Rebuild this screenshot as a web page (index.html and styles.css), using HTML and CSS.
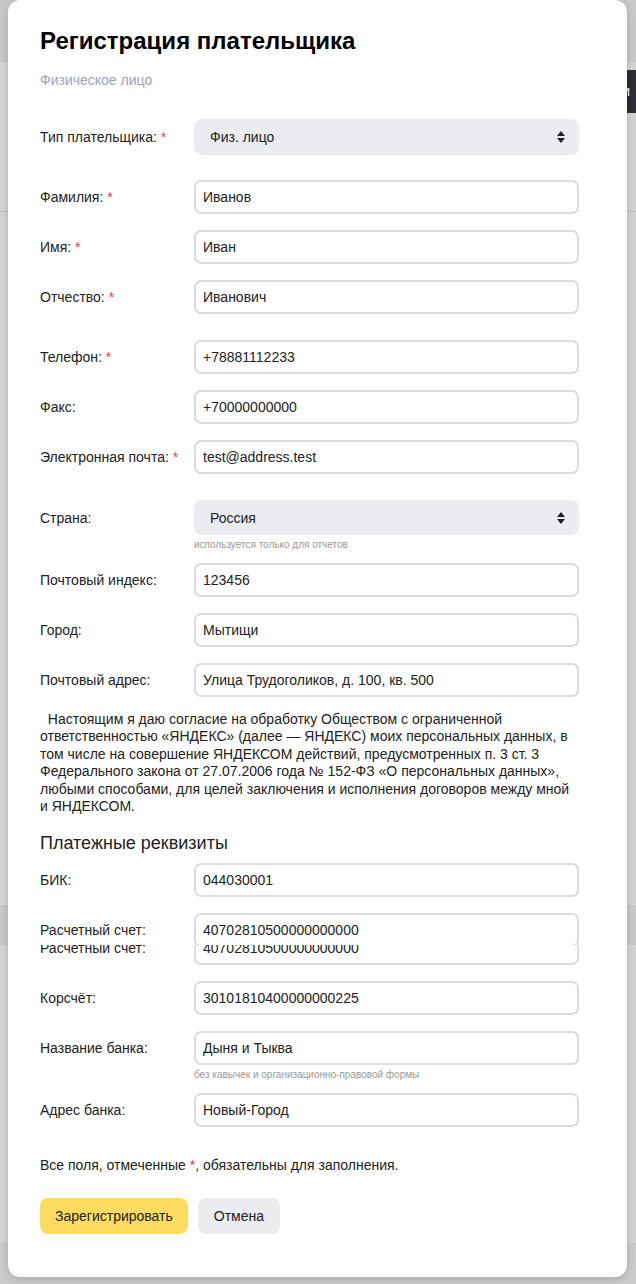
FILE: index.html
```html
<!DOCTYPE html>
<html lang="ru">
<head>
<meta charset="utf-8">
<title>Регистрация плательщика</title>
<link rel="stylesheet" href="styles.css">
</head>
<body>
<div class="backdrop">
  <div class="bg-top"></div>
  <div class="bg-btn">Ви</div>
  <div class="bg-line"></div>
  <div class="bg-band"></div>
  <div class="bg-bottom"></div>
</div>
<div class="modal">
  <h1 class="title">Регистрация плательщика</h1>
  <div class="subtitle">Физическое лицо</div>
  <form class="form">
    <div class="group">
      <div class="row">
        <label class="label">Тип плательщика: <span class="req">*</span></label>
        <div class="select"><span>Физ. лицо</span>
          <svg class="arrows" width="8" height="12" viewBox="0 0 8 12"><path d="M4 0L8 5H0Z M4 12L0 7H8Z" fill="#222"/></svg>
        </div>
      </div>
    </div>
    <div class="group">
      <div class="row"><label class="label">Фамилия: <span class="req">*</span></label><input class="input" value="Иванов"></div>
      <div class="row"><label class="label">Имя: <span class="req">*</span></label><input class="input" value="Иван"></div>
      <div class="row"><label class="label">Отчество: <span class="req">*</span></label><input class="input" value="Иванович"></div>
    </div>
    <div class="group">
      <div class="row"><label class="label">Телефон: <span class="req">*</span></label><input class="input" value="+78881112233"></div>
      <div class="row"><label class="label">Факс:</label><input class="input" value="+70000000000"></div>
      <div class="row"><label class="label">Электронная почта: <span class="req">*</span></label><input class="input" value="test@address.test"></div>
    </div>
    <div class="group group-last">
      <div class="field">
        <div class="row">
          <label class="label">Страна:</label>
          <div class="select select-country"><span>Россия</span>
            <svg class="arrows" width="8" height="12" viewBox="0 0 8 12"><path d="M4 0L8 5H0Z M4 12L0 7H8Z" fill="#222"/></svg>
          </div>
        </div>
        <div class="hint">используется только для отчетов</div>
      </div>
      <div class="row"><label class="label">Почтовый индекс:</label><input class="input" value="123456"></div>
      <div class="row"><label class="label">Город:</label><input class="input" value="Мытищи"></div>
      <div class="row"><label class="label">Почтовый адрес:</label><input class="input" value="Улица Трудоголиков, д. 100, кв. 500"></div>
    </div>
    <p class="consent">&nbsp;&nbsp;Настоящим я даю согласие на обработку Обществом с ограниченной<br>ответственностью «ЯНДЕКС» (далее — ЯНДЕКС) моих персональных данных, в<br>том числе на совершение ЯНДЕКСОМ действий, предусмотренных п. 3 ст. 3<br>Федерального закона от 27.07.2006 года № 152-ФЗ «О персональных данных»,<br>любыми способами, для целей заключения и исполнения договоров между мной<br>и ЯНДЕКСОМ.</p>
    <h2 class="section">Платежные реквизиты</h2>
    <div class="group">
      <div class="row"><label class="label">БИК:</label><input class="input" value="044030001"></div>
      <div class="clip clip-top">
        <div class="row"><label class="label">Расчетный счет:</label><input class="input" value="40702810500000000000"></div>
      </div>
      <div class="clip clip-bottom">
        <div class="row"><label class="label">Расчетный счет:</label><input class="input" value="40702810500000000000"></div>
      </div>
      <div class="row"><label class="label">Корсчёт:</label><input class="input" value="30101810400000000225"></div>
      <div class="field">
        <div class="row"><label class="label">Название банка:</label><input class="input" value="Дыня и Тыква"></div>
        <div class="hint">без кавычек и организационно-правовой формы</div>
      </div>
      <div class="row"><label class="label">Адрес банка:</label><input class="input" value="Новый-Город"></div>
    </div>
    <p class="note">Все поля, отмеченные <span class="req">*</span>, обязательны для заполнения.</p>
    <div class="actions">
      <button type="button" class="btn btn-primary">Зарегистрировать</button>
      <button type="button" class="btn btn-secondary">Отмена</button>
    </div>
  </form>
</div>
</body>
</html>
```
FILE: styles.css
```css
* { box-sizing: border-box; }
html, body { margin: 0; padding: 0; }
body {
  background: #d4d4d4;
  font-family: "Liberation Sans", Arial, sans-serif;
  font-size: 14px;
  color: #222;
  position: relative;
  min-height: 1284px;
  overflow: hidden;
}
.backdrop { position: absolute; inset: 0; }
.bg-top { position: absolute; left: 0; right: 0; top: 0; height: 62px; background: #c9c9c9; }
.bg-btn {
  position: absolute; left: 600px; top: 70px; width: 60px; height: 43px;
  background: #2d2c37; color: #fff; border-radius: 4px;
  font-size: 14px; line-height: 43px; padding-left: 13px;
}
.bg-line { position: absolute; left: 0; right: 0; top: 211px; height: 1px; background: #c2c2c2; }
.bg-band { position: absolute; left: 0; right: 0; top: 905px; height: 40px; background: #c9c9c9; }
.bg-bottom { position: absolute; left: 0; right: 0; top: 1243px; bottom: 0; background: #cbcbcb; }

.modal {
  position: relative;
  margin-left: 8px;
  width: 619px;
  background: #fff;
  border-radius: 12px;
  box-shadow: 0 2px 8px rgba(0,0,0,0.18);
  padding: 27px 48px 43px 32px;
}
.title {
  margin: 0;
  font-size: 24px;
  line-height: 28px;
  font-weight: bold;
  color: #000;
}
.subtitle {
  margin-top: 17px;
  font-size: 14px;
  line-height: 16px;
  color: #9da2b6;
}
.form { margin-top: 31px; }
.group { display: flex; flex-direction: column; gap: 16px; margin-bottom: 26px; }
.group:first-child { margin-bottom: 25px; }
.group-last { margin-bottom: 14px; }
.row { display: flex; align-items: center; }
.label { width: 154px; flex: none; color: #222; }
.req { color: #f33; }
.input {
  width: 385px;
  height: 34px;
  border: 2px solid #d9dbe5;
  border-radius: 7px;
  padding: 0 7px;
  font-family: inherit;
  font-size: 14px;
  color: #222;
  background: #fff;
  outline: none;
}
.select {
  width: 385px;
  height: 36px;
  background: #ebecf0;
  border-radius: 8px;
  display: flex;
  align-items: center;
  justify-content: space-between;
  padding: 0 14px 0 16px;
  color: #222;
}
.select-country { height: 35px; }
.hint {
  margin-left: 154px;
  margin-top: 4px;
  margin-bottom: -4px;
  font-size: 10px;
  line-height: 12px;
  color: #999;
}
.consent {
  margin: 0;
  font-size: 14px;
  line-height: 17.4px;
  color: #222;
  white-space: nowrap;
}
.section {
  margin: 17px 0 9px;
  font-size: 18px;
  line-height: 22px;
  font-weight: normal;
  color: #222;
}
.clip { overflow: hidden; }
.clip-top { height: 32px; }
.clip-bottom { height: 20px; margin-top: -16px; }
.clip-bottom .row { margin-top: -14px; }
.note { margin: 30px 0 0; line-height: 16px; }
.actions { display: flex; gap: 10px; margin-top: 25px; }
.btn {
  height: 36px;
  border: none;
  border-radius: 8px;
  padding: 0 15px;
  font-family: inherit;
  font-size: 14px;
  color: #222;
}
.btn-primary { background: #ffdc60; }
.btn-secondary { background: #ebecf0; padding: 0 16px; }
```
